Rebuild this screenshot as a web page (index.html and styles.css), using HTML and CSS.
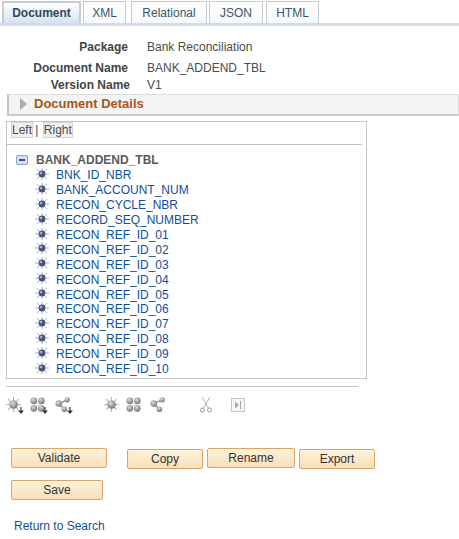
FILE: index.html
```html
<!DOCTYPE html>
<html lang="en">
<head>
    <meta charset="UTF-8">
    <title>Document Builder</title>
    <link rel="stylesheet" href="styles.css">
</head>
<body>
    <svg class="icon-defs" width="0" height="0">
        <defs>
            <radialGradient id="ballGrey" cx="40%" cy="35%" r="70%">
                <stop offset="0" stop-color="#dcdcdc"/>
                <stop offset="1" stop-color="#6e6e6e"/>
            </radialGradient>
            <symbol id="atomBlue" viewBox="0 0 14 12">
                <path d="M2 1l10 10M12 1L2 11M7 0v12M0 6h14" stroke="#a9b0c4" stroke-width="1"/>
                <circle cx="7" cy="6" r="3.4" fill="#46557f"/>
                <circle cx="6" cy="5" r="1.3" fill="#a9b3cf"/>
            </symbol>
            <symbol id="atomGrey" viewBox="0 0 14 14">
                <path d="M2 2l10 10M12 2L2 12M7 0v14M0 7h14" stroke="#b5b5b5" stroke-width="1"/>
                <circle cx="7" cy="7" r="4" fill="url(#ballGrey)"/>
            </symbol>
            <symbol id="fourBalls" viewBox="0 0 16 16">
                <circle cx="4" cy="4" r="3.6" fill="url(#ballGrey)"/>
                <circle cx="12" cy="4" r="3.6" fill="url(#ballGrey)"/>
                <circle cx="4" cy="12" r="3.6" fill="url(#ballGrey)"/>
                <circle cx="12" cy="12" r="3.6" fill="url(#ballGrey)"/>
            </symbol>
            <symbol id="linkedBalls" viewBox="0 0 16 16">
                <path d="M4 7L13 3M4 7l6 6" stroke="#8c8c8c" stroke-width="1.500"/>
                <circle cx="4" cy="7" r="3.500" fill="url(#ballGrey)"/>
                <circle cx="13" cy="3" r="2.800" fill="url(#ballGrey)"/>
                <circle cx="10" cy="13" r="3" fill="url(#ballGrey)"/>
            </symbol>
            <symbol id="arrowDown" viewBox="0 0 5 6">
                <path d="M2 0h1v3h2L2.500 6 0 3h2z" fill="#333"/>
            </symbol>
        </defs>
    </svg>

    <div class="tabs">
        <a class="tab tab-active tab-document">Document</a>
        <a class="tab tab-xml">XML</a>
        <a class="tab tab-relational">Relational</a>
        <a class="tab tab-json">JSON</a>
        <a class="tab tab-html">HTML</a>
    </div>

    <div class="summary">
        <div class="summary-row row-package"><span class="summary-label">Package</span><span class="summary-value">Bank Reconciliation</span></div>
        <div class="summary-row row-name"><span class="summary-label">Document Name</span><span class="summary-value">BANK_ADDEND_TBL</span></div>
        <div class="summary-row row-version"><span class="summary-label label-version">Version Name</span><span class="summary-value">V1</span></div>
    </div>

    <div class="section-bar">
        <span class="section-arrow"></span>
        <span class="section-title">Document Details</span>
    </div>

    <div class="tree-box">
        <div class="tree-links">
            <span class="tree-link">Left</span> | <span class="tree-link link-right">Right</span>
        </div>
        <div class="tree-root">
            <span class="collapse-btn"><span class="collapse-dash"></span></span>
            <span class="root-name">BANK_ADDEND_TBL</span>
        </div>
        <ul class="tree-list">
            <li><svg class="node-icon"><use href="#atomBlue"/></svg><a>BNK_ID_NBR</a></li>
            <li><svg class="node-icon"><use href="#atomBlue"/></svg><a>BANK_ACCOUNT_NUM</a></li>
            <li><svg class="node-icon"><use href="#atomBlue"/></svg><a>RECON_CYCLE_NBR</a></li>
            <li><svg class="node-icon"><use href="#atomBlue"/></svg><a>RECORD_SEQ_NUMBER</a></li>
            <li><svg class="node-icon"><use href="#atomBlue"/></svg><a>RECON_REF_ID_01</a></li>
            <li><svg class="node-icon"><use href="#atomBlue"/></svg><a>RECON_REF_ID_02</a></li>
            <li><svg class="node-icon"><use href="#atomBlue"/></svg><a>RECON_REF_ID_03</a></li>
            <li><svg class="node-icon"><use href="#atomBlue"/></svg><a>RECON_REF_ID_04</a></li>
            <li><svg class="node-icon"><use href="#atomBlue"/></svg><a>RECON_REF_ID_05</a></li>
            <li><svg class="node-icon"><use href="#atomBlue"/></svg><a>RECON_REF_ID_06</a></li>
            <li><svg class="node-icon"><use href="#atomBlue"/></svg><a>RECON_REF_ID_07</a></li>
            <li><svg class="node-icon"><use href="#atomBlue"/></svg><a>RECON_REF_ID_08</a></li>
            <li><svg class="node-icon"><use href="#atomBlue"/></svg><a>RECON_REF_ID_09</a></li>
            <li><svg class="node-icon"><use href="#atomBlue"/></svg><a>RECON_REF_ID_10</a></li>
        </ul>
    </div>

    <div class="toolbar">
        <span class="tool tool-atom-add">
            <svg class="tool-icon"><use href="#atomGrey"/></svg>
            <svg class="tool-arrow"><use href="#arrowDown"/></svg>
        </span>
        <span class="tool tool-four-add">
            <svg class="tool-icon"><use href="#fourBalls"/></svg>
            <svg class="tool-arrow"><use href="#arrowDown"/></svg>
        </span>
        <span class="tool tool-link-add">
            <svg class="tool-icon"><use href="#linkedBalls"/></svg>
            <svg class="tool-arrow"><use href="#arrowDown"/></svg>
        </span>
        <span class="tool tool-atom"><svg class="tool-icon"><use href="#atomGrey"/></svg></span>
        <span class="tool tool-four"><svg class="tool-icon"><use href="#fourBalls"/></svg></span>
        <span class="tool tool-link"><svg class="tool-icon"><use href="#linkedBalls"/></svg></span>
        <svg class="tool-cut" viewBox="0 0 12 16">
            <path d="M2 0l6.500 11M10 0L3.500 11" stroke="#aeaeae" stroke-width="1" fill="none"/>
            <circle cx="2.500" cy="13" r="2" stroke="#9a9a9a" fill="none"/>
            <circle cx="9.500" cy="13" r="2" stroke="#9a9a9a" fill="none"/>
        </svg>
        <svg class="tool-end" viewBox="0 0 14 14">
            <rect x="0.500" y="0.500" width="13" height="13" fill="#f6f6f6" stroke="#c4c4c4"/>
            <path d="M4 3.500l4 3.500-4 3.500z" fill="#a8a8a8"/>
            <path d="M9.500 3v8" stroke="#a8a8a8"/>
        </svg>
    </div>

    <div class="buttons">
        <div class="button-row">
            <button class="btn btn-validate">Validate</button>
            <button class="btn btn-copy">Copy</button>
            <button class="btn btn-rename">Rename</button>
            <button class="btn btn-export">Export</button>
        </div>
        <button class="btn btn-save">Save</button>
    </div>

    <a class="return-link">Return to Search</a>
</body>
</html>
```

FILE: styles.css
```css
body {
    margin: 0;
    background: #fff;
    font-family: 'Liberation Sans', Arial, sans-serif;
    font-size: 12px;
    color: #333;
    overflow: hidden;
}
.icon-defs {
    position: absolute;
}

/* tabs */
.tabs {
    display: flex;
    height: 22px;
    padding-top: 1px;
    padding-left: 2px;
    border-bottom: 3px solid #cfdcec;
}
.tab {
    box-sizing: border-box;
    height: 22px;
    border: 1px solid #c3c9d0;
    border-bottom: none;
    background: linear-gradient(#fff, #f7f8fa);
    color: #40566e;
    text-align: center;
    line-height: 23px;
}
.tab-active {
    background: linear-gradient(#fff, #d5e3f3);
    border: 2px solid #c6ccd3;
    border-bottom: none;
    color: #33475b;
    font-weight: bold;
}
.tab-document { width: 79px; margin-right: 2px; line-height: 21px; }
.tab-xml { width: 43px; margin-right: 5px; }
.tab-relational { width: 76px; margin-right: 2px; }
.tab-json { width: 54px; margin-right: 3px; }
.tab-html { width: 53px; }

/* summary */
.summary {
    padding-top: 11px;
    padding-bottom: 2px;
}
.summary-row {
    display: flex;
    align-items: center;
    height: 19px;
}
.row-name {
    margin-top: 2px;
}
.row-version {
    height: 15px;
}
.summary-label {
    width: 128px;
    text-align: right;
    font-weight: bold;
    color: #444;
}
.label-version {
    width: 130px;
    margin-right: -2px;
}
.summary-value {
    margin-left: 19px;
    color: #4c4c4c;
}

/* collapsed section */
.section-bar {
    box-sizing: border-box;
    display: flex;
    align-items: center;
    height: 22px;
    margin: 0 0 0 7px;
    padding-left: 11px;
    padding-bottom: 2px;
    background: #f3f5f3;
    border: 1px solid #dcdcdc;
    border-left: 2px solid #c4c4c4;
    border-bottom: 2px solid #c9c9c9;
}
.section-arrow {
    width: 0;
    height: 0;
    border-top: 6px solid transparent;
    border-bottom: 6px solid transparent;
    border-left: 7px solid #adadad;
}
.section-title {
    margin-left: 7px;
    font-size: 13px;
    font-weight: bold;
    color: #a9541a;
}

/* tree */
.tree-box {
    box-sizing: border-box;
    width: 361px;
    height: 258px;
    margin: 5px 0 0 6px;
    border: 1px solid #c4c4c4;
}
.tree-links {
    height: 21px;
    margin-right: 4px;
    padding: 1px 0 0 5px;
    border-bottom: 1px solid #c4c4c4;
    line-height: 15px;
    color: #4c4c4c;
}
.tree-link {
    background: #f0f0f0;
    outline: 1px solid #d4d4d4;
}
.link-right {
    margin-left: 2px;
}
.tree-root {
    display: flex;
    align-items: center;
    height: 15px;
    margin-top: 7px;
    padding-left: 9px;
}
.collapse-btn {
    box-sizing: border-box;
    display: flex;
    align-items: center;
    justify-content: center;
    width: 12px;
    height: 10px;
    background: #d5e1f2;
    border: 1px solid #8fa6cf;
    border-radius: 1px;
}
.collapse-dash {
    width: 6px;
    height: 2px;
    background: #33508c;
}
.root-name {
    margin-left: 8px;
    font-weight: bold;
    color: #5a5a5a;
}
.tree-list {
    list-style: none;
    margin: 0;
    padding: 1px 0 0 28px;
}
.tree-list li {
    display: flex;
    align-items: center;
    height: 14.9px;
}
.tree-list a {
    margin-left: 7px;
    color: #0e4f9b;
}
.node-icon {
    width: 14px;
    height: 12px;
    margin-top: -3px;
}

/* toolbar */
.toolbar {
    display: flex;
    width: 352px;
    height: 31px;
    margin: 7px 0 0 6px;
    padding-top: 10px;
    border-top: 1px solid #c4c4c4;
}
.tool {
    position: relative;
    display: block;
    width: 16px;
    height: 20px;
}
.tool-icon {
    width: 15px;
    height: 15px;
}
.tool-arrow {
    position: absolute;
    left: 12px;
    top: 10px;
    width: 6px;
    height: 7px;
}
.tool-atom-add { margin-right: 8px; }
.tool-four-add { margin-right: 9px; }
.tool-link-add { margin-right: 33px; }
.tool-atom { margin-right: 6px; }
.tool-four { margin-right: 8px; }
.tool-link { margin-right: 34px; }
.tool-cut {
    width: 12px;
    height: 16px;
    margin-right: 19px;
}
.tool-end {
    width: 14px;
    height: 14px;
    margin-top: 1px;
}

/* buttons */
.buttons {
    padding: 20px 0 0 11px;
}
.button-row {
    display: flex;
    align-items: flex-start;
    margin-bottom: 11px;
}
.btn {
    box-sizing: border-box;
    display: block;
    height: 20px;
    padding: 0;
    border: 1px solid #dba36a;
    border-radius: 2px;
    background: linear-gradient(#fdf2dc, #fbdfb8);
    font-family: 'Liberation Sans', Arial, sans-serif;
    font-size: 12px;
    color: #333;
}
.btn-validate { width: 96px; margin-right: 20px; }
.btn-copy { width: 76px; margin: 1px 4px 0 0; }
.btn-rename { width: 88px; margin-right: 4px; }
.btn-export { width: 76px; margin-top: 1px; }
.btn-save { width: 92px; }

.return-link {
    display: block;
    margin: 19px 0 0 14px;
    color: #0e4f9b;
}
```
